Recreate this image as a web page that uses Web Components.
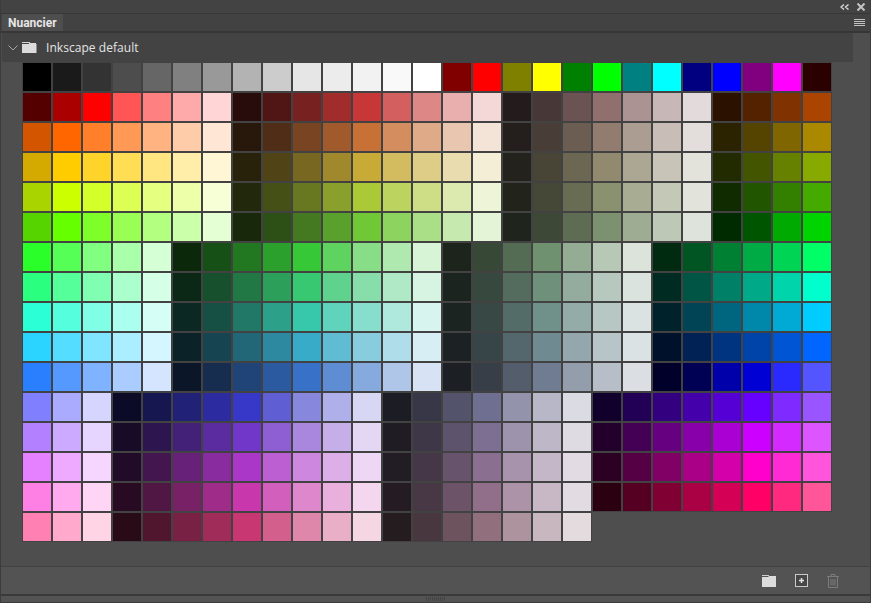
<!DOCTYPE html>
<html lang="fr">
<head>
<meta charset="utf-8">
<title>Nuancier</title>
<style>
  html, body { margin: 0; padding: 0; background: #424242; }
</style>
</head>
<body>
<swatch-panel>
  <span slot="tab">Nuancier</span>
  <swatch-group>
    <span slot="name">Inkscape default</span>
    <swatch-grid id="grid"></swatch-grid>
  </swatch-group>
</swatch-panel>

<script>
  const PALETTE = `
    000000 1a1a1a 333333 4d4d4d 666666 808080 999999 b3b3b3 cccccc e6e6e6 ececec f2f2f2 f9f9f9 ffffff 800000 ff0000 808000 ffff00 008000 00ff00 008080 00ffff 000080 0000ff 800080 ff00ff 2b0000
    550000 aa0000 ff0000 ff5555 ff8080 ffaaaa ffd5d5 280b0b 501616 782121 a02c2c c83737 d35f5f de8787 e9afaf f4d7d7 241c1c 483737 6c5353 916f6f ac9393 c8b7b7 e3dbdb 2b1100 552200 803300 aa4400
    d45500 ff6600 ff7f2a ff9955 ffb380 ffccaa ffe6d5 28170b 502d16 784421 a05a2c c87137 d38d5f deaa87 e9c6af f4e3d7 241f1c 483e37 6c5d53 917c6f ac9d93 c8beb7 e3dedb 2b2200 554400 806600 aa8800
    d4aa00 ffcc00 ffd42a ffdd55 ffe680 ffeeaa fff6d5 28220b 504416 786721 a0892c c8ab37 d3bc5f decd87 e9ddaf f4eed7 24221c 484537 6c6753 918a6f aca793 c8c4b7 e3e2db 222b00 445500 668000 88aa00
    aad400 ccff00 d4ff2a ddff55 e5ff80 eeffaa f6ffd5 22280b 445016 677821 89a02c abc837 bcd35f cdde87 ddeaaf eef4d7 22241c 454837 676c53 8a916f a7ac93 c4c8b7 e2e3db 112b00 225500 338000 44aa00
    55d400 66ff00 7fff2a 99ff55 b3ff80 ccffaa e5ffd5 17280b 2d5016 447821 5aa02c 71c837 8dd35f aade87 c6e9af e3f4d7 1f241c 3e4837 5d6c53 7c916f 9dac93 bec8b7 dee3db 002b00 005500 00aa00 00d400
    2aff2a 55ff55 80ff80 aaffaa d5ffd5 0b280b 165016 217821 2ca02c 37c837 5fd35f 87de87 afe9af d7f4d7 1c241c 374837 536c53 6f916f 93ac93 b7c8b7 dbe3db 002b11 005522 008033 00aa44 00d455 00ff66
    2aff80 55ff99 80ffb3 aaffcc d5ffe6 0b2817 16502d 217844 2ca05a 37c871 5fd38d 87deaa afe9c6 d7f4e3 1c241f 37483e 536c5d 6f917c 93ac9d b7c8be dbe3de 002b22 005544 008066 00aa88 00d4aa 00ffcc
    2affd5 55ffdd 80ffe6 aaffee d5fff6 0b2822 165044 217867 2ca089 37c8ab 5fd3bc 87decd afe9dd d7f4ee 1c2422 374845 536c67 6f918a 93aca7 b7c8c4 dbe3e2 00222b 004455 006680 0088aa 00aad4 00ccff
    2ad4ff 55ddff 80e5ff aaeeff d5f6ff 0b2228 164450 216778 2c89a0 37abc8 5fbcd3 87cdde afdde9 d7eef4 1c2224 374548 53676c 6f8a91 93a7ac b7c4c8 dbe2e3 00112b 002255 003380 0044aa 0055d4 0066ff
    2a7fff 5599ff 80b3ff aaccff d5e5ff 0b1728 162d50 214478 2c5aa0 3771c8 5f8dd3 87aade afc6e9 d7e3f4 1c1f24 373e48 535d6c 6f7c91 939dac b7bec8 dbdee3 00002b 000055 0000aa 0000d4 2a2aff 5555ff
    8080ff aaaaff d5d5ff 0b0b28 161650 212178 2c2ca0 3737c8 5f5fd3 8787de afafe9 d7d7f4 1c1c24 373748 53536c 6f6f91 9393ac b7b7c8 dbdbe3 11002b 220055 330080 4400aa 5500d4 6600ff 7f2aff 9955ff
    b380ff ccaaff e5d5ff 170b28 2d1650 442178 5a2ca0 7137c8 8d5fd3 aa87de c6afe9 e3d7f4 1f1c24 3e3748 5d536c 7c6f91 9d93ac beb7c8 dedbe3 22002b 440055 660080 8800aa aa00d4 cc00ff d42aff dd55ff
    e580ff eeaaff f6d5ff 220b28 441650 672178 892ca0 ab37c8 bc5fd3 cd87de ddafe9 eed7f4 221c24 453748 67536c 8a6f91 a793ac c4b7c8 e2dbe3 2b0022 550044 800066 aa0088 d400aa ff00cc ff2ad4 ff55dd
    ff80e5 ffaaee ffd5f6 280b22 501644 782167 a02c89 c837ab d35fbc de87cd e9afdd f4d7ee 241c22 483745 6c5367 916f8a ac93a7 c8b7c4 e3dbe2 2b0011 550022 800033 aa0044 d40055 ff0066 ff2a7f ff5599
    ff80b2 ffaacc ffd5e5 280b17 50162d 782144 a02c5a c83771 d35f8d de87aa e9afc6 f4d7e3 241c1f 48373e 6c535d 916f7c ac939d c8b7be e3dbde
  `.trim().split(/\s+/);

  class SwatchChip extends HTMLElement {
    constructor() {
      super();
      this.attachShadow({ mode: "open" });
    }

    connectedCallback() {
      this.shadowRoot.innerHTML = `
        <style>
          :host{
            display:block;
            width:28px;
            height:28px;
            background:var(--chip);
            box-shadow:0 0 0 1px #424242;
          }
        </style>
      `;
      this.style.setProperty("--chip", "#" + this.getAttribute("color"));
    }
  }

  class SwatchGrid extends HTMLElement {
    constructor() {
      super();
      this.attachShadow({ mode: "open" });
    }

    connectedCallback() {
      this.shadowRoot.innerHTML = `
        <style>
          :host{
            display:grid;
            grid-template-columns:repeat(27,28px);
            grid-auto-rows:28px;
            gap:2px;
            padding:1px 0 0 22px;
          }
        </style>
        <slot></slot>
      `;
      PALETTE.forEach((color) => {
        const chip = document.createElement("swatch-chip");
        chip.setAttribute("color", color);
        this.appendChild(chip);
      });
    }
  }

  class SwatchGroup extends HTMLElement {
    constructor() {
      super();
      this.attachShadow({ mode: "open" });
    }

    connectedCallback() {
      this.shadowRoot.innerHTML = `
        <style>
          :host{
            display:block;
            flex:1;
            background:#4e4e4e;
          }

          .head{
            display:flex;
            align-items:center;
            height:29px;
            margin:0 17px 0 1px;
            padding-left:6px;
            background:#434343;
            color:#e4e4e4;
            font:12px "Open Sans",sans-serif;
            letter-spacing:.05px;
          }

          .chevron{
            width:10px;
            height:6px;
            margin-top:1px;
          }

          .folder{
            width:15px;
            height:11px;
            margin:0 9px 0 4px;
          }
        </style>

        <div class="head">
          <svg class="chevron" viewBox="0 0 10 6" fill="none" stroke="#a8a8a8">
            <path d="M.5.5 5 5 9.500.5"/>
          </svg>
          <svg class="folder" viewBox="0 0 15 11">
            <path d="M0 0h8v1H0z" fill="#d4d4d4"/>
            <path d="M0 2h6.500l1-1H14v1h-1 1.500V11H0z" fill="#dcdcdc"/>
          </svg>
          <slot name="name"></slot>
        </div>
        <slot></slot>
      `;
    }
  }

  class PanelFooter extends HTMLElement {
    constructor() {
      super();
      this.attachShadow({ mode: "open" });
    }

    connectedCallback() {
      this.shadowRoot.innerHTML = `
        <style>
          :host{
            display:flex;
            justify-content:flex-end;
            align-items:center;
            gap:19px;
            height:27px;
            padding:0 31px 0 0;
            border-top:1px solid #414141;
            background:#535353;
          }

          svg{
            display:block;
          }
        </style>

        <svg width="14" height="12" viewBox="0 0 14 12">
          <path d="M0 0h7v1H0z" fill="#cfcfcf"/>
          <path d="M0 2h6l1-1h7v11H0z" fill="#dcdcdc"/>
        </svg>
        <svg width="13" height="13" viewBox="0 0 13 13">
          <rect x=".5" y=".5" width="12" height="12" fill="#474747" stroke="#cacaca"/>
          <path d="M4 6.500h5M6.500 4v5" stroke="#e2e2e2" stroke-width="1.500"/>
        </svg>
        <svg width="12" height="14" viewBox="0 0 12 14" fill="none" stroke="#7c7c7c">
          <path d="M0 2.500h12M4 2.500V.5h4v2M1.500 2.500V13.500h9V2.500M4 5v6.500M6 5v6.500M8 5v6.500"/>
        </svg>
      `;
    }
  }

  class SwatchPanel extends HTMLElement {
    constructor() {
      super();
      this.attachShadow({ mode: "open" });
    }

    connectedCallback() {
      this.shadowRoot.innerHTML = `
        <style>
          :host{
            display:flex;
            flex-direction:column;
            width:871px;
            height:603px;
            box-sizing:border-box;
            overflow:hidden;
            background:#4e4e4e;
            border-left:1px solid #3c3c3c;
            border-right:1px solid #3c3c3c;
            font-family:"Open Sans",sans-serif;
          }

          .title{
            display:flex;
            justify-content:flex-end;
            align-items:center;
            gap:8px;
            height:13px;
            padding-right:5px;
            background:#434343;
            border-bottom:1px solid #373737;
          }

          .tabs{
            display:flex;
            justify-content:space-between;
            align-items:center;
            height:17px;
            padding:0 5px 0 1px;
            background:#424242;
            border-bottom:2px solid #363636;
          }

          .tab{
            align-self:stretch;
            display:flex;
            align-items:center;
            padding:0 6px;
            background:#4e4e4e;
            color:#e6e6e6;
            font:700 12px Roboto,sans-serif;
          }

          .grip{
            display:flex;
            justify-content:center;
            align-items:center;
            height:9px;
            box-sizing:border-box;
            background:#535353;
            border-top:2px solid #3a3a3a;
            border-bottom:1px solid #3c3c3c;
          }

          .grip i{
            width:19px;
            height:4px;
            background:repeating-linear-gradient(90deg,#444 0 1px,transparent 1px 2px);
          }
        </style>

        <div class="title">
          <svg width="9" height="6" viewBox="0 0 9 6" fill="none" stroke="#d8d8d8" stroke-width="1.400">
            <path d="M4 .5 1 3l3 2.500M8.500.5 5.500 3l3 2.500"/>
          </svg>
          <svg width="8" height="8" viewBox="0 0 8 8" stroke="#c4c4c4" stroke-width="2">
            <path d="M.5.5l7 7M7.500.5l-7 7"/>
          </svg>
        </div>
        <div class="tabs">
          <div class="tab"><slot name="tab"></slot></div>
          <svg width="11" height="7" viewBox="0 0 11 7" fill="none" stroke="#c2c2c2">
            <path d="M0 .5h11M0 2.500h11M0 4.500h11M0 6.500h11"/>
          </svg>
        </div>
        <slot></slot>
        <panel-footer></panel-footer>
        <div class="grip"><i></i></div>
      `;
    }
  }

  customElements.define("swatch-chip", SwatchChip);
  customElements.define("swatch-grid", SwatchGrid);
  customElements.define("swatch-group", SwatchGroup);
  customElements.define("panel-footer", PanelFooter);
  customElements.define("swatch-panel", SwatchPanel);
</script>
</body>
</html>
